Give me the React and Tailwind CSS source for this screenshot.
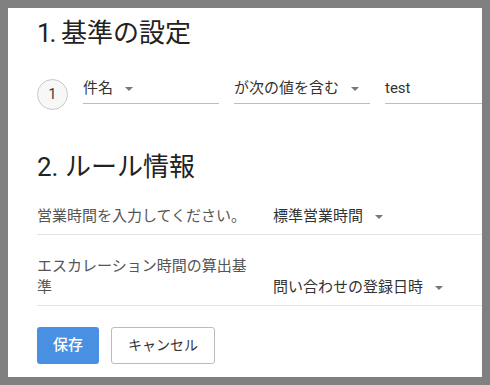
import React from 'react';

const font = { fontFamily: 'Roboto, "Noto Sans CJK JP", sans-serif' };

function Caret() {
  return <span className="ml-3 inline-block h-0 w-0 border-x-[4px] border-t-[4px] border-x-transparent border-t-[#777]" />;
}

function Field({ value, caret = true, width = 'w-[136px]' }) {
  return (
    <div className={`${width} shrink-0 border-b border-[#bdbdbd] pb-[4px] flex items-center h-[26px]`}>
      <span className="text-[15px] leading-[21px] text-[#333]">{value}</span>
      {caret && <Caret />}
    </div>
  );
}

function Row({ label, value, extraTop }) {
  return (
    <div className={`grid grid-cols-[236px_1fr] items-end border-b border-[#e2e2e2] pb-[7px] ${extraTop}`}>
      <div className="pr-4 text-[15px] leading-[21px] text-[#555]">{label}</div>
      <div className="flex items-center text-[15px] leading-[21px] text-[#333]">
        {value}
        <Caret />
      </div>
    </div>
  );
}

export default function App() {
  return (
    <div className="h-screen w-full bg-[#808080] p-2" style={font}>
      <div className="h-full overflow-hidden bg-white pl-[29px] pt-[10px]">
        <h2 className="text-[26px] leading-[30px] text-[#222]">
          <span className="tracking-[-2px]">1.</span> 基準の設定
        </h2>

        <div className="mt-[30px] flex items-end gap-[15px] whitespace-nowrap">
          <div className="mb-[-6px] flex h-[31px] w-[31px] shrink-0 items-center justify-center rounded-full border border-[#c8c8c8] bg-[#f7f7f7] text-[14px] text-[#333]">
            1
          </div>
          <Field value="件名" />
          <Field value="が次の値を含む" />
          <Field value="test" caret={false} width="w-[200px]" />
        </div>

        <h2 className="mt-[48px] text-[26px] leading-[30px] text-[#222]">2. ルール情報</h2>

        <Row label="営業時間を入力してください。" value="標準営業時間" extraTop="pt-[24px]" />
        <Row label="エスカレーション時間の算出基準" value="問い合わせの登録日時" extraTop="pt-[21px]" />

        <div className="mt-[21px] flex gap-3">
          <button className="h-[37px] rounded-[3px] bg-[#4a90e2] px-4 text-[15px] font-medium text-white">保存</button>
          <button className="h-[37px] rounded-[3px] border border-[#bbb] bg-white px-4 text-[14px] text-[#333]">キャンセル</button>
        </div>
      </div>
    </div>
  );
}
